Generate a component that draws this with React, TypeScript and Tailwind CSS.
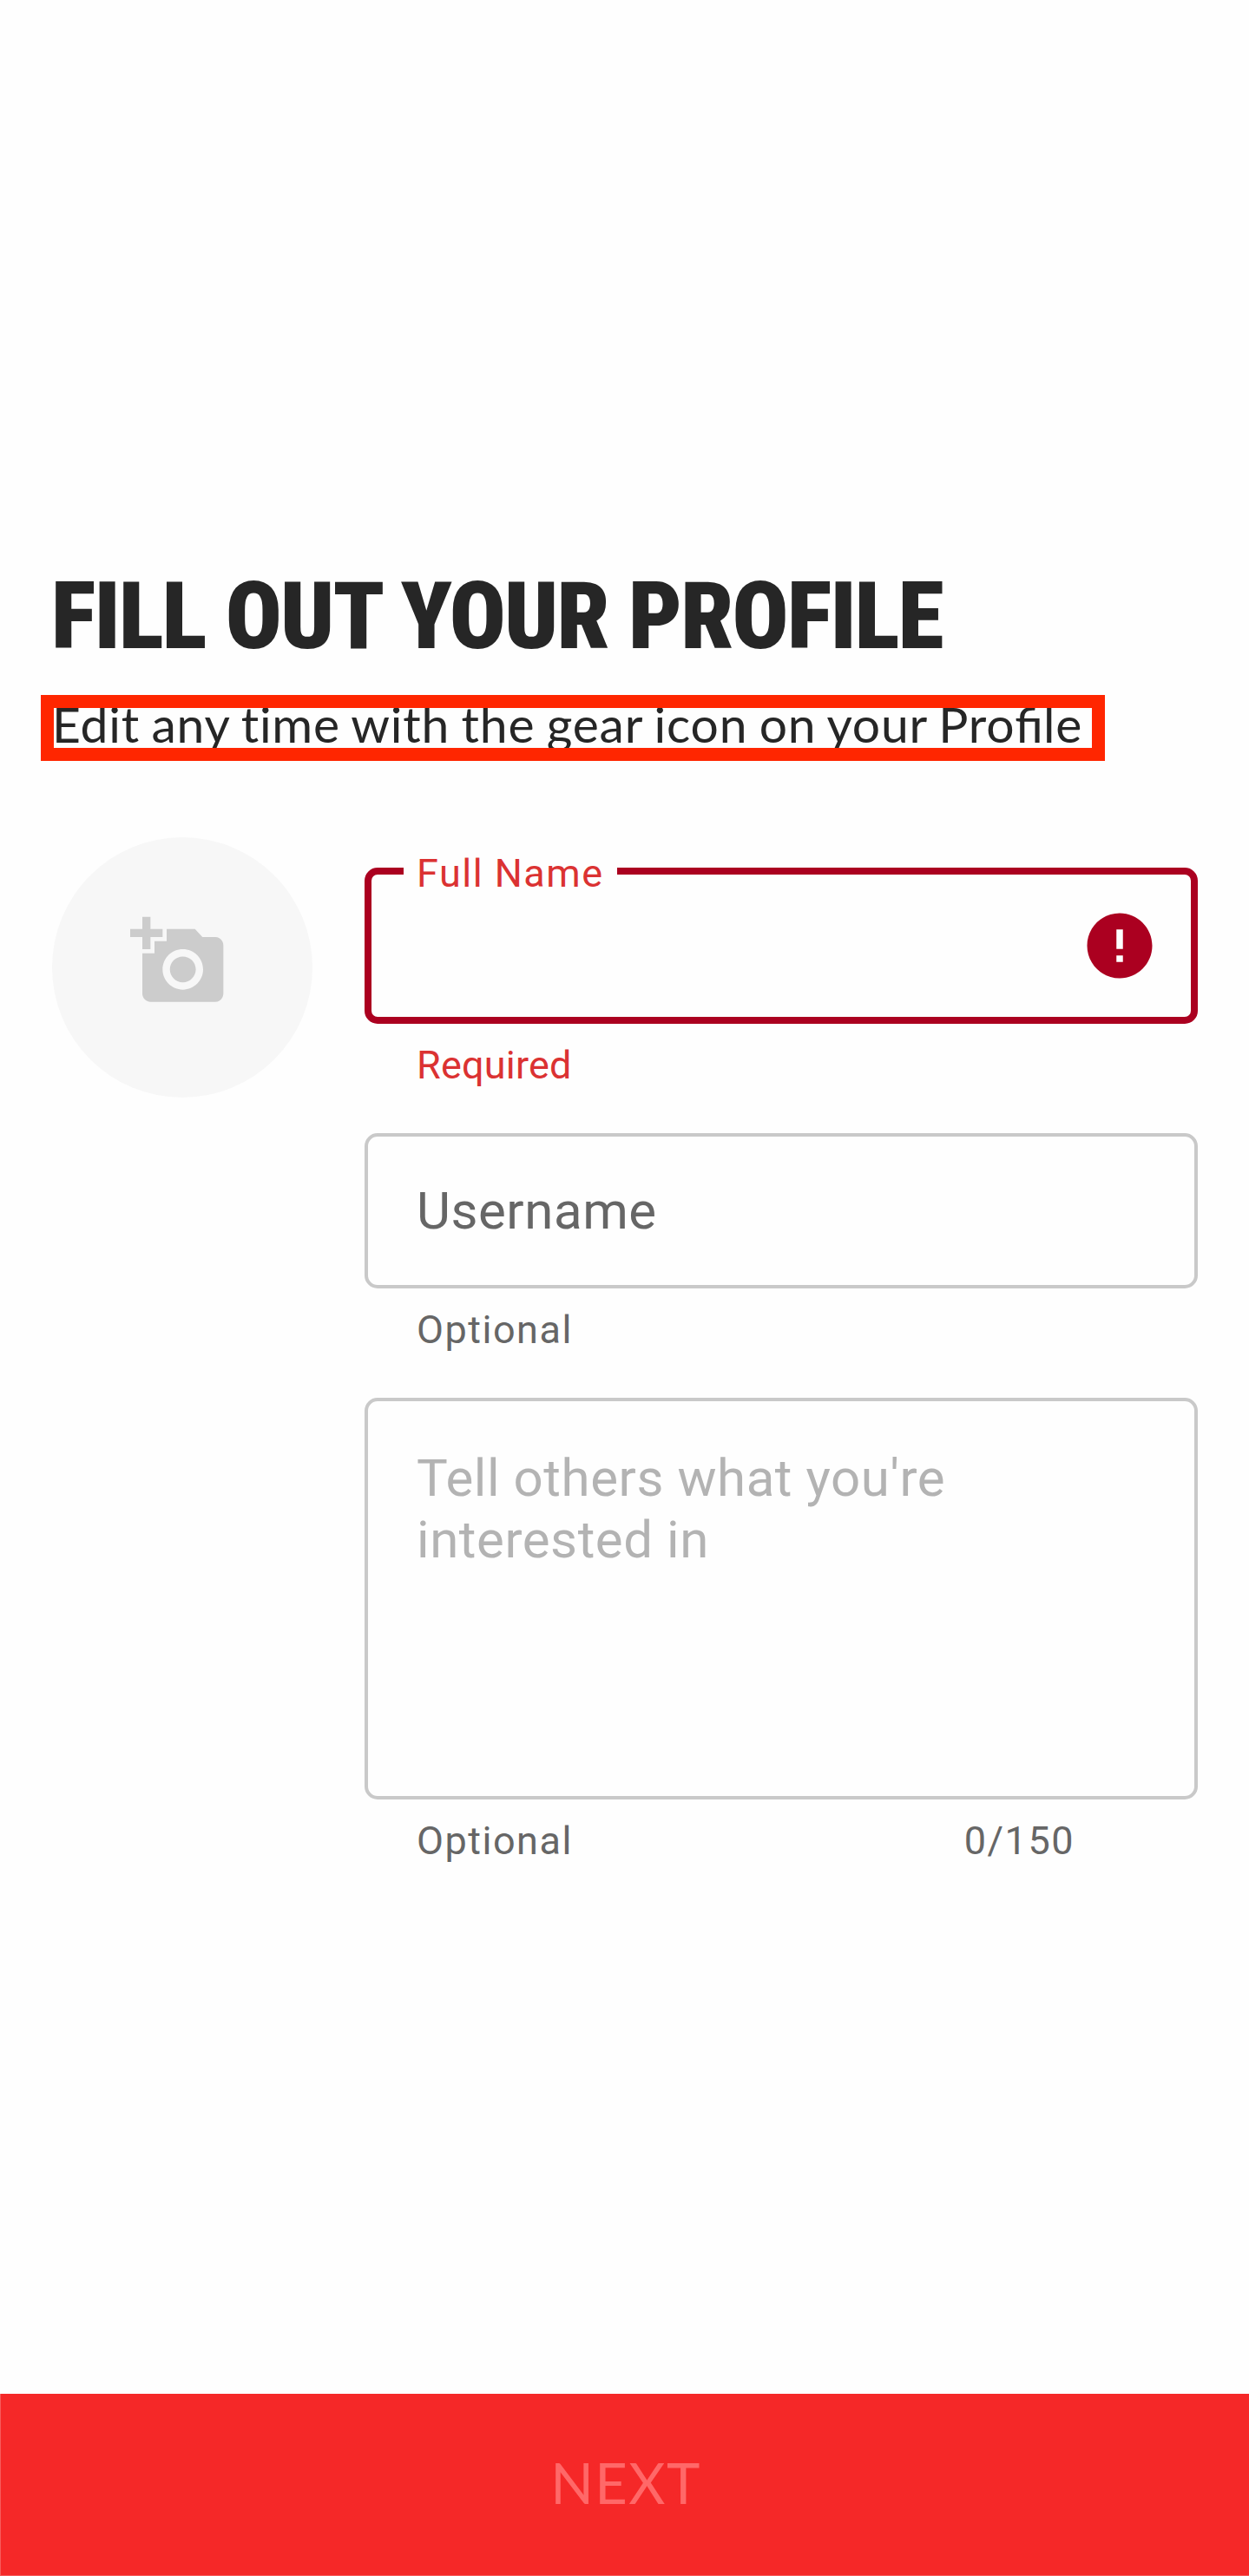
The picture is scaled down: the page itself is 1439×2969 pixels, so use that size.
import type { ReactNode } from "react";
import { MdAddAPhoto, MdError } from "react-icons/md";

function Helper({ children }: { children: ReactNode }) {
  return (
    <div className="mt-[21px] flex justify-between pl-[60px] pr-[142px] text-[45px] leading-[53px] tracking-[1.5px] text-[#666666]">
      {children}
    </div>
  );
}

export default function App() {
  return (
    <div className="flex h-[2969px] w-[1439px] flex-col overflow-hidden bg-[#fefefe] font-['Roboto',sans-serif]">
      <h1 className="mt-[647px] pl-[59px] text-[108px] leading-[126px] font-black tracking-[-1.85px] whitespace-nowrap text-[#262626] [font-stretch:75%]">
        FILL OUT YOUR PROFILE
      </h1>

      <div className="mt-7 ml-[47px] h-[76px] w-[1226px] overflow-hidden border-[15px] border-[#ff2600]">
        <p className="-mt-4 -ml-0.5 font-['Lato',sans-serif] text-[57px] leading-[68px] tracking-[0.81px] whitespace-nowrap text-[#262626] [word-spacing:-2px]">
          Edit any time with the gear icon on your Pro<span className="tracking-normal">fi</span>le
        </p>
      </div>

      <div className="mt-[88px] flex items-start gap-[60px] pl-[60px]">
        <button
          className="flex h-[300px] w-[300px] items-start rounded-full bg-[#f7f7f7] pt-[87px] pl-[90px]"
          aria-label="Add photo"
        >
          <MdAddAPhoto className="size-[112px] text-[#cccccc]" />
        </button>

        <div className="flex w-[960px] flex-col pt-[35px]">
          <div className="relative flex h-[180px] items-center justify-end rounded-[15px] border-8 border-[#ab0020] pr-[37px]">
            <label className="absolute -top-[28px] left-[37px] w-[246px] bg-[#fefefe] pl-[15px] text-[45px] leading-[53px] tracking-[1.5px] whitespace-nowrap text-[#db3232]">
              Full Name
            </label>
            <MdError className="size-[90px] text-[#ab0020]" />
          </div>
          <div className="mt-[21px] pl-[60px] text-[45px] leading-[53px] tracking-[0.2px] text-[#db3232]">Required</div>

          <div className="mt-[52px] h-[179px] rounded-[15px] border-4 border-[#c9c9c9] pt-[50px] pl-[56px] text-[60px] leading-[71px] tracking-[0.56px] text-[#666666]">
            Username
          </div>
          <Helper>
            <span>Optional</span>
          </Helper>

          <div className="mt-[52px] h-[463px] rounded-[15px] border-4 border-[#c9c9c9] pt-[53px] pl-[56px] text-[60px] leading-[71px] tracking-[0.56px] text-[#b3b3b3]">
            Tell others what you're
            <br />
            interested in
          </div>
          <Helper>
            <span>Optional</span>
            <span>0/150</span>
          </Helper>
        </div>
      </div>

      <button className="mt-auto flex h-[210px] items-start justify-center border-b border-l border-[#f75b5b] bg-[#f52828] pt-[63px] pl-[2px] font-['Lato',sans-serif] text-[65px] leading-[78px] tracking-[1.5px] text-[#ff6868]">
        NEXT
      </button>
    </div>
  );
}
